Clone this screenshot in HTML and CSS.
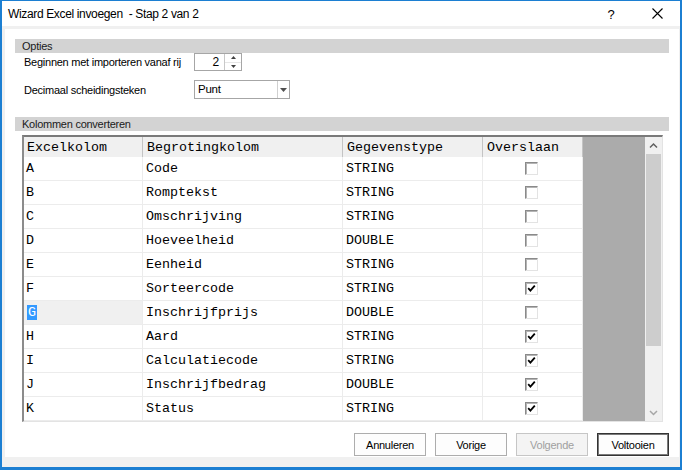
FILE: index.html
```html
<!DOCTYPE html>
<html lang="nl">
<head>
<meta charset="utf-8">
<title>Wizard Excel invoegen - Stap 2 van 2</title>
<link rel="stylesheet" href="styles.css">
</head>
<body>
<div class="window">
  <div class="titlebar">
    <span class="title">Wizard Excel invoegen&nbsp; - Stap 2 van 2</span>
    <div class="tb-buttons">
      <span class="tb-btn tb-help">?</span>
      <span class="tb-btn tb-close"><svg width="11" height="11" viewBox="0 0 11 11"><path d="M0.5 0.5L10.5 10.5M10.5 0.5L0.5 10.5" stroke="#000" stroke-width="1.1" fill="none"/></svg></span>
    </div>
  </div>
  <div class="frame">
    <div class="panel">
      <div class="section-bar">Opties</div>
      <div class="form-row row-start">
        <span class="form-label">Beginnen met importeren vanaf rij</span>
        <div class="spin">
          <span class="spin-value">2</span>
          <span class="spin-buttons">
            <span class="spin-btn"><svg width="5" height="3" viewBox="0 0 5 3"><path d="M0 3L2.5 0L5 3Z" fill="#404040"/></svg></span>
            <span class="spin-btn"><svg width="5" height="3" viewBox="0 0 5 3"><path d="M0 0L2.5 3L5 0Z" fill="#404040"/></svg></span>
          </span>
        </div>
      </div>
      <div class="form-row row-decimal">
        <span class="form-label">Decimaal scheidingsteken</span>
        <div class="combo">
          <span class="combo-value">Punt</span>
          <span class="combo-drop"><svg width="7" height="4" viewBox="0 0 7 4"><path d="M0 0L3.5 4L7 0Z" fill="#505050"/></svg></span>
        </div>
      </div>
      <div class="section-bar section-columns">Kolommen converteren</div>
      <div class="dgv">
        <div class="dgv-table">
          <div class="hcell">Excelkolom</div>
          <div class="hcell">Begrotingkolom</div>
          <div class="hcell">Gegevenstype</div>
          <div class="hcell">Overslaan</div>

          <div class="cell c1">A</div><div class="cell c2">Code</div><div class="cell c3">STRING</div><div class="cell c4"><span class="chk"></span></div>
          <div class="cell c1">B</div><div class="cell c2">Romptekst</div><div class="cell c3">STRING</div><div class="cell c4"><span class="chk"></span></div>
          <div class="cell c1">C</div><div class="cell c2">Omschrijving</div><div class="cell c3">STRING</div><div class="cell c4"><span class="chk"></span></div>
          <div class="cell c1">D</div><div class="cell c2">Hoeveelheid</div><div class="cell c3">DOUBLE</div><div class="cell c4"><span class="chk"></span></div>
          <div class="cell c1">E</div><div class="cell c2">Eenheid</div><div class="cell c3">STRING</div><div class="cell c4"><span class="chk"></span></div>
          <div class="cell c1">F</div><div class="cell c2">Sorteercode</div><div class="cell c3">STRING</div><div class="cell c4"><span class="chk checked"><svg width="9" height="9" viewBox="0 0 9 9"><path d="M1.2 4.2L3.4 6.6L7.8 1.6" stroke="#000" stroke-width="1.8" fill="none"/></svg></span></div>
          <div class="cell c1 editing"><span class="sel">G</span></div><div class="cell c2">Inschrijfprijs</div><div class="cell c3">DOUBLE</div><div class="cell c4"><span class="chk"></span></div>
          <div class="cell c1">H</div><div class="cell c2">Aard</div><div class="cell c3">STRING</div><div class="cell c4"><span class="chk checked"><svg width="9" height="9" viewBox="0 0 9 9"><path d="M1.2 4.2L3.4 6.6L7.8 1.6" stroke="#000" stroke-width="1.8" fill="none"/></svg></span></div>
          <div class="cell c1">I</div><div class="cell c2">Calculatiecode</div><div class="cell c3">STRING</div><div class="cell c4"><span class="chk checked"><svg width="9" height="9" viewBox="0 0 9 9"><path d="M1.2 4.2L3.4 6.6L7.8 1.6" stroke="#000" stroke-width="1.8" fill="none"/></svg></span></div>
          <div class="cell c1">J</div><div class="cell c2">Inschrijfbedrag</div><div class="cell c3">DOUBLE</div><div class="cell c4"><span class="chk checked"><svg width="9" height="9" viewBox="0 0 9 9"><path d="M1.2 4.2L3.4 6.6L7.8 1.6" stroke="#000" stroke-width="1.8" fill="none"/></svg></span></div>
          <div class="cell c1">K</div><div class="cell c2">Status</div><div class="cell c3">STRING</div><div class="cell c4"><span class="chk checked"><svg width="9" height="9" viewBox="0 0 9 9"><path d="M1.2 4.2L3.4 6.6L7.8 1.6" stroke="#000" stroke-width="1.8" fill="none"/></svg></span></div>
        </div>
        <div class="dgv-filler"></div>
        <div class="vscroll">
          <span class="sb-btn"><svg width="17" height="17" viewBox="0 0 17 17"><path d="M5 10.5L8.5 7L12 10.5" stroke="#606060" stroke-width="1.5" fill="none"/></svg></span>
          <span class="sb-track"><span class="sb-thumb"></span></span>
          <span class="sb-btn"><svg width="17" height="17" viewBox="0 0 17 17"><path d="M5 7L8.5 10.5L12 7" stroke="#a6a6a6" stroke-width="1.5" fill="none"/></svg></span>
        </div>
      </div>
      <div class="button-row">
        <span class="btn">Annuleren</span>
        <span class="btn">Vorige</span>
        <span class="btn btn-disabled">Volgende</span>
        <span class="btn btn-default">Voltooien</span>
      </div>
    </div>
  </div>
</div>
</body>
</html>
```
FILE: styles.css
```css
* { box-sizing: border-box; }
html, body { margin: 0; padding: 0; background: #ffffff; }
body {
  font-family: "Liberation Sans", Arial, sans-serif;
  font-size: 11px;
  letter-spacing: -0.25px;
  color: #000;
}
.window {
  width: 682px;
  height: 470px;
  border-style: solid;
  border-color: #1c7fd2;
  border-width: 1px 2px 3px 2px;
  display: flex;
  flex-direction: column;
  background: #f0f0f0;
}
.titlebar {
  height: 25px;
  flex: none;
  background: #ffffff;
  display: flex;
  align-items: center;
  justify-content: space-between;
}
.title {
  padding-left: 6px;
  font-size: 12px;
  letter-spacing: -0.35px;
  white-space: pre;
}
.tb-buttons { display: flex; height: 100%; }
.tb-btn {
  width: 46px;
  height: 100%;
  display: flex;
  align-items: center;
  justify-content: center;
}
.tb-help { font-size: 13px; letter-spacing: 0; padding-top: 1px; }
.frame {
  flex: 1;
  padding: 3px 1px 10px 3px;
  display: flex;
}
.panel {
  flex: 1;
  background: #ffffff;
  padding: 0 10px;
  display: flex;
  flex-direction: column;
}
.section-bar {
  margin-top: 10px;
  height: 14px;
  line-height: 14px;
  background: #d3d3d3;
  padding-left: 7px;
  color: #1a1a1a;
}
.section-columns { margin-top: 18px; }
.form-row {
  display: flex;
  align-items: center;
  padding-left: 9px;
}
.row-start { height: 18px; }
.row-decimal { height: 19px; margin-top: 9px; }
.form-label { width: 170px; flex: none; }
.spin {
  width: 48px;
  height: 18px;
  border: 1px solid #a6a6a6;
  display: flex;
}
.spin-value {
  flex: 1;
  text-align: right;
  padding-right: 5px;
  font-size: 12px;
  line-height: 16px;
}
.spin-buttons {
  width: 17px;
  border-left: 1px solid #c8c8c8;
  display: flex;
  flex-direction: column;
}
.spin-btn {
  flex: 1;
  display: flex;
  align-items: center;
  justify-content: center;
}
.spin-btn + .spin-btn { border-top: 1px solid #e6e6e6; }
.combo {
  width: 96px;
  height: 19px;
  border: 1px solid #a6a6a6;
  display: flex;
}
.combo-value { flex: 1; padding-left: 3px; line-height: 17px; font-size: 11.5px; }
.combo-drop {
  width: 12px;
  border-left: 1px solid #d0d0d0;
  display: flex;
  align-items: center;
  justify-content: center;
}
.dgv {
  margin-top: 4px;
  margin-left: 7px;
  width: 641px;
  height: 287px;
  border-style: solid;
  border-width: 2px 1px 1px 2px;
  border-color: #7a7a7a #e3e3e3 #e3e3e3 #8c8c8c;
  display: flex;
  font-family: "Liberation Mono", "Courier New", monospace;
  font-size: 13.33px;
  letter-spacing: 0;
}
.dgv-table {
  width: 559px;
  flex: none;
  display: grid;
  grid-template-columns: 119px 200px 140px 100px;
  grid-template-rows: 20px;
  grid-auto-rows: 24px;
}
.hcell {
  background: #f0f0f0;
  border-right: 1px solid #c4c4c4;
  padding-left: 4px;
  display: flex;
  align-items: center;
}
.hcell:first-child { padding-left: 3px; }
.cell {
  border-right: 1px solid #ececec;
  border-bottom: 1px solid #ececec;
  display: flex;
  align-items: center;
  padding-left: 3px;
  background: #ffffff;
}
.cell.c1 { padding-left: 2px; }
.cell.c4 { justify-content: center; padding-left: 0; padding-right: 2px; }
.cell.editing { background: #f0f0f0; }
.sel {
  background: #3399ff;
  color: #ffffff;
  margin-left: 1px;
  padding: 0 1px 0 1px;
  line-height: 15px;
  display: inline-block;
}
.chk {
  width: 13px;
  height: 13px;
  border: 1px solid;
  border-color: #8a8a8a #e3e3e3 #e3e3e3 #8a8a8a;
  box-shadow: inset 1px 1px 0 #b4b4b4;
  background: #ffffff;
  display: flex;
  align-items: center;
  justify-content: center;
}
.dgv-filler { width: 62px; flex: none; background: #ababab; }
.vscroll {
  width: 17px;
  flex: none;
  background: #f0f0f0;
  display: flex;
  flex-direction: column;
}
.sb-btn { height: 17px; flex: none; display: block; }
.sb-btn svg { display: block; }
.sb-track { flex: 1; display: flex; flex-direction: column; padding: 0 1px; }
.sb-thumb { height: 192px; background: #cdcdcd; display: block; }
.button-row {
  margin-top: 11px;
  display: flex;
  justify-content: flex-end;
  gap: 9px;
}
.btn {
  width: 72px;
  height: 23px;
  border: 1px solid #adadad;
  background: #fdfdfd;
  display: flex;
  align-items: center;
  justify-content: center;
}
.btn-disabled { background: #f4f4f4; border-color: #c6c6c6; color: #a0a0a0; }
.btn-default { border-color: #333333; box-shadow: inset 0 0 0 1px #7a7a7a; }
```
